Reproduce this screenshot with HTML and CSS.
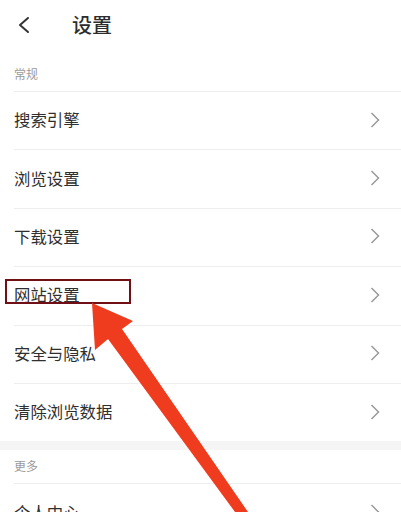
FILE: index.html
```html
<!DOCTYPE html>
<html lang="zh">
<head>
<meta charset="utf-8">
<link rel="stylesheet" href="styles.css">
</head>
<body>
<div class="page">
  <header class="topbar">
    <svg class="back" width="16" height="20" viewBox="0 0 16 20"><polyline points="11,3 3,10 11,17" fill="none" stroke="#333" stroke-width="2" stroke-linecap="round" stroke-linejoin="round"/></svg>
    <h1 class="title">设置</h1>
  </header>
  <div class="section-label">常规</div>
  <ul class="list">
    <li class="row"><span>搜索引擎</span><svg class="chev" width="10" height="16" viewBox="0 0 10 16"><polyline points="1.5,1 8.5,8 1.5,15" fill="none" stroke="#9a9a9a" stroke-width="1.5"/></svg></li>
    <li class="row"><span>浏览设置</span><svg class="chev" width="10" height="16" viewBox="0 0 10 16"><polyline points="1.5,1 8.5,8 1.5,15" fill="none" stroke="#9a9a9a" stroke-width="1.5"/></svg></li>
    <li class="row"><span>下载设置</span><svg class="chev" width="10" height="16" viewBox="0 0 10 16"><polyline points="1.5,1 8.5,8 1.5,15" fill="none" stroke="#9a9a9a" stroke-width="1.5"/></svg></li>
    <li class="row"><span>网站设置</span><svg class="chev" width="10" height="16" viewBox="0 0 10 16"><polyline points="1.5,1 8.5,8 1.5,15" fill="none" stroke="#9a9a9a" stroke-width="1.5"/></svg></li>
    <li class="row"><span>安全与隐私</span><svg class="chev" width="10" height="16" viewBox="0 0 10 16"><polyline points="1.5,1 8.5,8 1.5,15" fill="none" stroke="#9a9a9a" stroke-width="1.5"/></svg></li>
    <li class="row"><span>清除浏览数据</span><svg class="chev" width="10" height="16" viewBox="0 0 10 16"><polyline points="1.5,1 8.5,8 1.5,15" fill="none" stroke="#9a9a9a" stroke-width="1.5"/></svg></li>
  </ul>
  <div class="band"></div>
  <div class="section-label small">更多</div>
  <ul class="list">
    <li class="row"><span>个人中心</span><svg class="chev" width="10" height="16" viewBox="0 0 10 16"><polyline points="1.5,1 8.5,8 1.5,15" fill="none" stroke="#9a9a9a" stroke-width="1.5"/></svg></li>
  </ul>
  <div class="highlight"></div>
  <svg class="arrow" width="401" height="512" viewBox="0 0 401 512"><polygon points="92,303 133,321 122,329 248,512 235,512 108,339 95,350" fill="#ef3b1e"/></svg>
</div>
</body>
</html>
```
FILE: styles.css
```css
* { box-sizing: border-box; }
html, body { margin: 0; padding: 0; background: #fff; }
body { font-family: "Noto Sans CJK SC", "Noto Sans", sans-serif; color: #333; }
.page { position: relative; width: 401px; height: 512px; overflow: hidden; background: #fff; }
.topbar { height: 50px; display: flex; align-items: center; padding-left: 17px; }
.back { display: block; margin-top: 0; }
.title { margin: 0 0 0 39px; font-size: 20px; font-weight: 500; color: #2d2d2d; line-height: 24px; }
.section-label { height: 41px; padding: 15px 0 0 14px; font-size: 12px; line-height: 17px; color: #9b9b9b; }
.section-label.small { height: 33px; padding-top: 7px; }
.list { list-style: none; margin: 0; padding: 0 0 0 14px; }
.row { height: 58.4px; border-top: 1px solid #eeeeee; display: flex; align-items: center; justify-content: space-between; padding: 0 21px 3px 0; font-size: 16.4px; line-height: 20px; color: #2f2f2f; }
.chev { display: block; margin-top: 1px; }
.band { height: 9px; background: #f5f5f5; }
.highlight { position: absolute; left: 5px; top: 279px; width: 126px; height: 25px; border: 2.7px solid #701016; }
.arrow { position: absolute; left: 0; top: 0; }
```
